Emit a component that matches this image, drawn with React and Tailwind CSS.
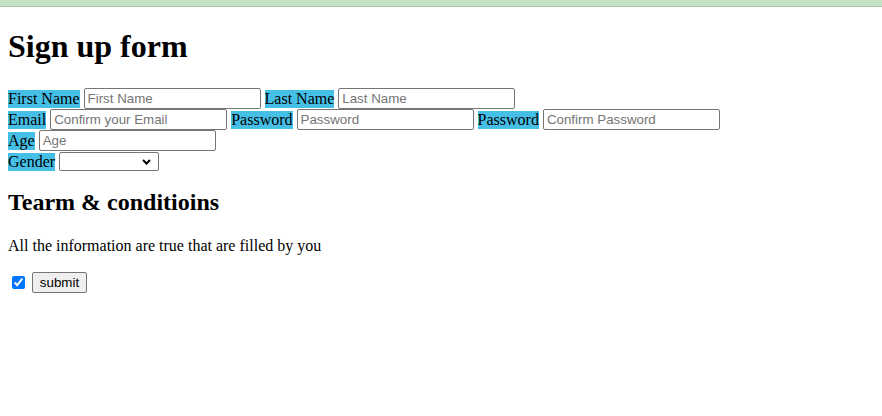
import React from 'react';

const serif = "font-['Liberation_Serif','Times_New_Roman',serif]";
const inputCls =
  "w-[177px] h-[21px] border border-[#767676] rounded-[2px] px-[3px] bg-white text-[13.33px] font-['Liberation_Sans',Arial,sans-serif] text-black placeholder:text-[#757575] outline-none";

function Label({ children }) {
  return <span className="bg-[#45bfe6] leading-[18px] text-[16px] text-black">{children}</span>;
}

export default function App() {
  return (
    <div className={`min-h-screen bg-white text-black ${serif}`}>
      {/* top strip */}
      <div className="h-[7px] bg-[#c6e2c6] border-b border-[#a3c4a3]" />

      <div className="px-2">
        <h1 className="text-[32px] font-bold leading-[37px] mt-[21px] mb-[23px]">Sign up form</h1>

        <form onSubmit={(e) => e.preventDefault()}>
          <div className="flex items-center gap-[4px] h-[21px]">
            <Label>First Name</Label>
            <input type="text" placeholder="First Name" className={inputCls} />
            <Label>Last Name</Label>
            <input type="text" placeholder="Last Name" className={inputCls} />
          </div>
          <div className="flex items-center gap-[4px] h-[21px]">
            <Label>Email</Label>
            <input type="email" placeholder="Confirm your Email" className={inputCls} />
            <Label>Password</Label>
            <input type="password" placeholder="Password" className={inputCls} />
            <Label>Password</Label>
            <input type="password" placeholder="Confirm Password" className={inputCls} />
          </div>
          <div className="flex items-center gap-[4px] h-[21px]">
            <Label>Age</Label>
            <input type="number" placeholder="Age" className={inputCls} />
          </div>
          <div className="flex items-center gap-[4px] h-[21px]">
            <Label>Gender</Label>
            <div className="relative">
              <select className="appearance-none block w-[100px] h-[19px] border border-[#767676] rounded-[2px] bg-white text-[13.33px] font-['Liberation_Sans',Arial,sans-serif] outline-none">
                <option value=""></option>
                <option value="male">Male</option>
                <option value="female">Female</option>
              </select>
              <svg
                className="absolute right-[8px] top-[7px] pointer-events-none"
                width="9"
                height="6"
                viewBox="0 0 9 6"
                fill="none"
              >
                <path d="M1 1l3.5 3.5L8 1" stroke="#000" strokeWidth="2" />
              </svg>
            </div>
          </div>

          <h2 className="text-[24px] font-bold leading-[28px] mt-[16px]">Tearm &amp; conditioins</h2>
          <p className="text-[16px] leading-[19px] mt-[20px]">All the information are true that are filled by you</p>

          <div className="flex items-center h-[21px] mt-[17px]">
            <input
              type="checkbox"
              defaultChecked
              className="w-[13px] h-[13px] ml-[4px] mr-[7px] accent-[#0075ff]"
            />
            <button
              type="submit"
              className="w-[55px] h-[21px] bg-[#efefef] border border-[#767676] rounded-[2px] text-[13.33px] font-['Liberation_Sans',Arial,sans-serif] text-black leading-none"
            >
              submit
            </button>
          </div>
        </form>
      </div>
    </div>
  );
}
